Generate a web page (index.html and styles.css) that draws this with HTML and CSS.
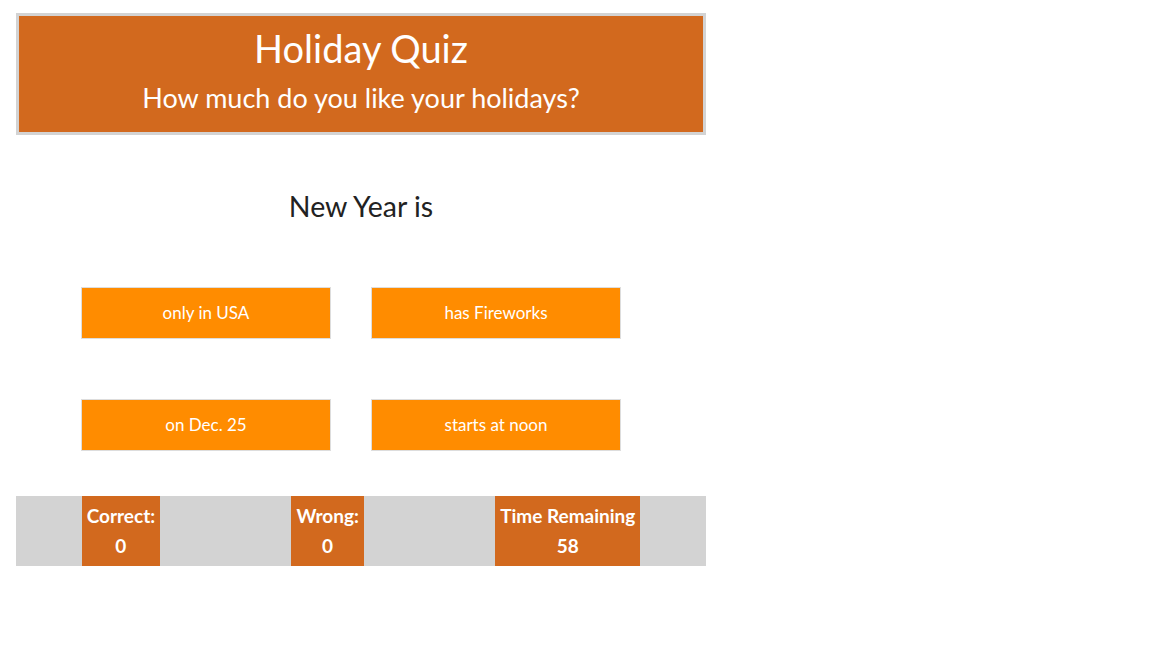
FILE: index.html
```html
<!DOCTYPE html>
<html>
<head>
<meta charset="utf-8">
<link rel="stylesheet" href="styles.css">
</head>
<body>
<div class="page">
  <header class="header">
    <h1 class="title">Holiday Quiz</h1>
    <p class="subtitle">How much do you like your holidays?</p>
  </header>
  <section class="question">
    <h2 class="question-text">New Year is</h2>
    <div class="answers">
      <button class="answer">only in USA</button>
      <button class="answer">has Fireworks</button>
      <button class="answer">on Dec. 25</button>
      <button class="answer">starts at noon</button>
    </div>
  </section>
  <footer class="scores">
    <div class="score"><span>Correct:</span><span>0</span></div>
    <div class="score"><span>Wrong:</span><span>0</span></div>
    <div class="score"><span>Time Remaining</span><span>58</span></div>
  </footer>
</div>
</body>
</html>
```
FILE: styles.css
```css
html, body { margin: 0; padding: 0; background: #fff; }
body { font-family: Lato, "Noto Sans", sans-serif; }
.page { width: 690px; padding: 13px 0 0 16px; }
.header {
  background: #d2691e;
  border: 3px solid #d3d3d3;
  height: 116px;
  width: 684px;
  text-align: center;
  color: #fff;
}
.title { margin: 0; padding-top: 11px; font-size: 38px; font-weight: 400; line-height: 42px; }
.subtitle { margin: 0; padding-top: 14px; font-size: 27px; line-height: 30px; }
.question { padding-top: 55px; }
.question-text {
  margin: 0; text-align: center; font-size: 28.5px; font-weight: 400; color: #222; line-height: 32px;
}
.answers {
  display: grid;
  grid-template-columns: 250px 250px;
  column-gap: 40px;
  row-gap: 60px;
  padding: 65px 0 0 65px;
}
.answer {
  height: 52px;
  background: #ff8c00;
  border: 1px solid #ddd;
  color: #fff;
  font-family: inherit;
  font-size: 17px;
  padding: 0 0 2px;
}
.scores {
  margin-top: 45px;
  height: 70px;
  background: #d3d3d3;
  display: flex;
  justify-content: space-around;
}
.score {
  background: #d2691e;
  color: #fff;
  font-weight: 700;
  font-size: 19px;
  display: flex;
  flex-direction: column;
  align-items: center;
  padding: 5px 5px 0;
  line-height: 30px;
}
```
